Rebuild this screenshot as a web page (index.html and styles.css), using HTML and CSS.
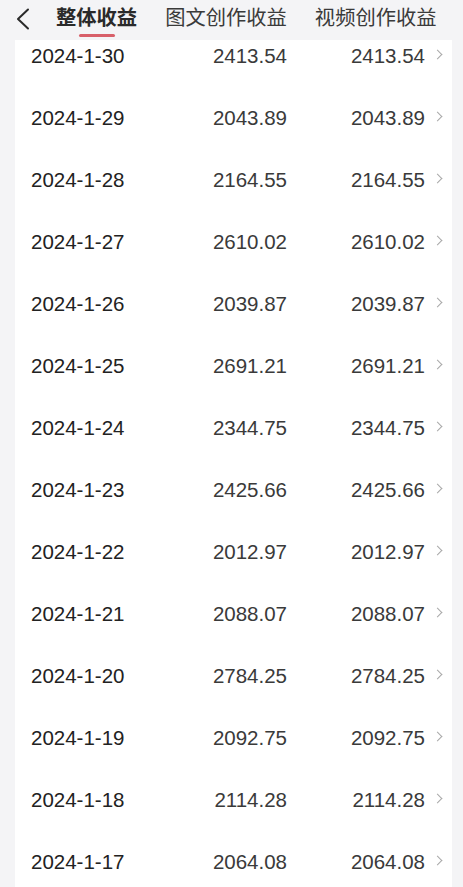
FILE: index.html
```html
<!DOCTYPE html>
<html lang="zh-CN">
<head>
<meta charset="utf-8">
<title>收益</title>
<link rel="stylesheet" href="styles.css">
</head>
<body>
<header class="topbar">
  <span class="back">
    <svg width="16" height="22" viewBox="0 0 16 22"><path d="M13 1.5 L3 11 L13 20.5" fill="none" stroke="#2a2a2a" stroke-width="2" stroke-linecap="round" stroke-linejoin="round"/></svg>
  </span>
  <nav class="tabs">
    <span class="tab active">整体收益</span>
    <span class="tab">图文创作收益</span>
    <span class="tab">视频创作收益</span>
  </nav>
</header>
<main class="viewport">
  <section class="card">
    <div class="row"><span class="date">2024-1-30</span><span class="num">2413.54</span><span class="num">2413.54</span><span class="chev"></span></div>
    <div class="row"><span class="date">2024-1-29</span><span class="num">2043.89</span><span class="num">2043.89</span><span class="chev"></span></div>
    <div class="row"><span class="date">2024-1-28</span><span class="num">2164.55</span><span class="num">2164.55</span><span class="chev"></span></div>
    <div class="row"><span class="date">2024-1-27</span><span class="num">2610.02</span><span class="num">2610.02</span><span class="chev"></span></div>
    <div class="row"><span class="date">2024-1-26</span><span class="num">2039.87</span><span class="num">2039.87</span><span class="chev"></span></div>
    <div class="row"><span class="date">2024-1-25</span><span class="num">2691.21</span><span class="num">2691.21</span><span class="chev"></span></div>
    <div class="row"><span class="date">2024-1-24</span><span class="num">2344.75</span><span class="num">2344.75</span><span class="chev"></span></div>
    <div class="row"><span class="date">2024-1-23</span><span class="num">2425.66</span><span class="num">2425.66</span><span class="chev"></span></div>
    <div class="row"><span class="date">2024-1-22</span><span class="num">2012.97</span><span class="num">2012.97</span><span class="chev"></span></div>
    <div class="row"><span class="date">2024-1-21</span><span class="num">2088.07</span><span class="num">2088.07</span><span class="chev"></span></div>
    <div class="row"><span class="date">2024-1-20</span><span class="num">2784.25</span><span class="num">2784.25</span><span class="chev"></span></div>
    <div class="row"><span class="date">2024-1-19</span><span class="num">2092.75</span><span class="num">2092.75</span><span class="chev"></span></div>
    <div class="row"><span class="date">2024-1-18</span><span class="num">2114.28</span><span class="num">2114.28</span><span class="chev"></span></div>
    <div class="row"><span class="date">2024-1-17</span><span class="num">2064.08</span><span class="num">2064.08</span><span class="chev"></span></div>
  </section>
</main>
</body>
</html>
```

FILE: styles.css
```css
html, body {
  margin: 0;
  padding: 0;
  background: #f4f4f6;
  height: 100%;
  overflow: hidden;
}
body {
  font-family: "Liberation Sans", "Noto Sans CJK SC", sans-serif;
  color: #333;
}
.topbar {
  height: 40px;
  display: flex;
  align-items: flex-start;
  background: #f4f4f6;
  position: relative;
  z-index: 2;
}
.back {
  display: flex;
  width: 16px;
  height: 22px;
  margin: 8px 0 0 15px;
}
.tabs {
  display: flex;
  gap: 28px;
  margin-left: 25px;
}
.tab {
  position: relative;
  font-family: "Noto Sans CJK SC", sans-serif;
  font-size: 20.3px;
  line-height: 32px;
  color: #3a3a3a;
  white-space: nowrap;
}
.tab.active {
  font-weight: 700;
  color: #2a2a2a;
}
.tab.active::after {
  content: "";
  position: absolute;
  left: 23px;
  width: 36px;
  top: 34px;
  height: 3px;
  border-radius: 2px;
  background: #d8606a;
}
.viewport {
  height: 847px;
  overflow: hidden;
}
.card {
  margin: -15px 11px 0 15px;
  background: #fff;
}
.row {
  height: 62px;
  display: grid;
  grid-template-columns: 120px 136px 138px 18px;
  align-items: center;
  padding-left: 16px;
  font-size: 20.5px;
}
.date {
  color: #222;
}
.num {
  text-align: right;
  color: #3a3a3a;
}
.chev {
  justify-self: end;
  width: 6px;
  height: 6px;
  border-top: 1.5px solid #a8a8a8;
  border-right: 1.5px solid #a8a8a8;
  transform: rotate(45deg);
  margin-right: 2px;
  margin-top: -3px;
}
```
